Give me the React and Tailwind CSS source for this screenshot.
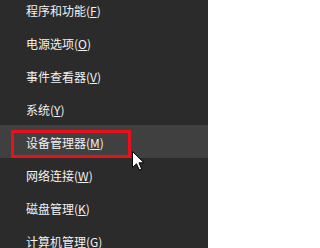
import React from "react";

const items = [
  ["程序和功能", "F"],
  ["电源选项", "O"],
  ["事件查看器", "V"],
  ["系统", "Y"],
  ["设备管理器", "M"],
  ["网络连接", "W"],
  ["磁盘管理", "K"],
  ["计算机管理", "G"],
];

function Cursor() {
  return (
    <svg
      className="absolute left-[132px] top-[26px] z-10"
      width="13"
      height="20"
      viewBox="0 0 13 20"
    >
      <path
        d="M0.5 0.5 L0.5 16.5 L4.5 12.8 L7.3 19 L9.6 18 L7 11.8 L12 11.8 Z"
        fill="#ffffff"
        stroke="#000000"
        strokeWidth="1"
        strokeLinejoin="miter"
      />
    </svg>
  );
}

export default function App() {
  return (
    <div
      className="w-[208px] h-[248px] overflow-hidden bg-[#2b2b2b]"
      style={{ fontFamily: '"Noto Sans CJK SC", "Noto Sans", sans-serif' }}
    >
      <div className="-mt-[7px] flex flex-col">
        {items.map(([label, key], i) => {
          const active = i === 4;
          return (
            <div
              key={label}
              className={
                "relative h-[33px] flex items-center pl-[26px] pt-[3px] text-[12px] leading-none text-[#f2f2f2] " +
                (active ? "bg-[#404040]" : "")
              }
            >
              <span>
                {label}(<span className="underline underline-offset-1">{key}</span>)
              </span>
              {active && (
                <>
                  <div className="absolute left-[11px] top-[5px] w-[120px] h-[28px] border-[3px] border-[#e8101a]" />
                  <Cursor />
                </>
              )}
            </div>
          );
        })}
      </div>
    </div>
  );
}
